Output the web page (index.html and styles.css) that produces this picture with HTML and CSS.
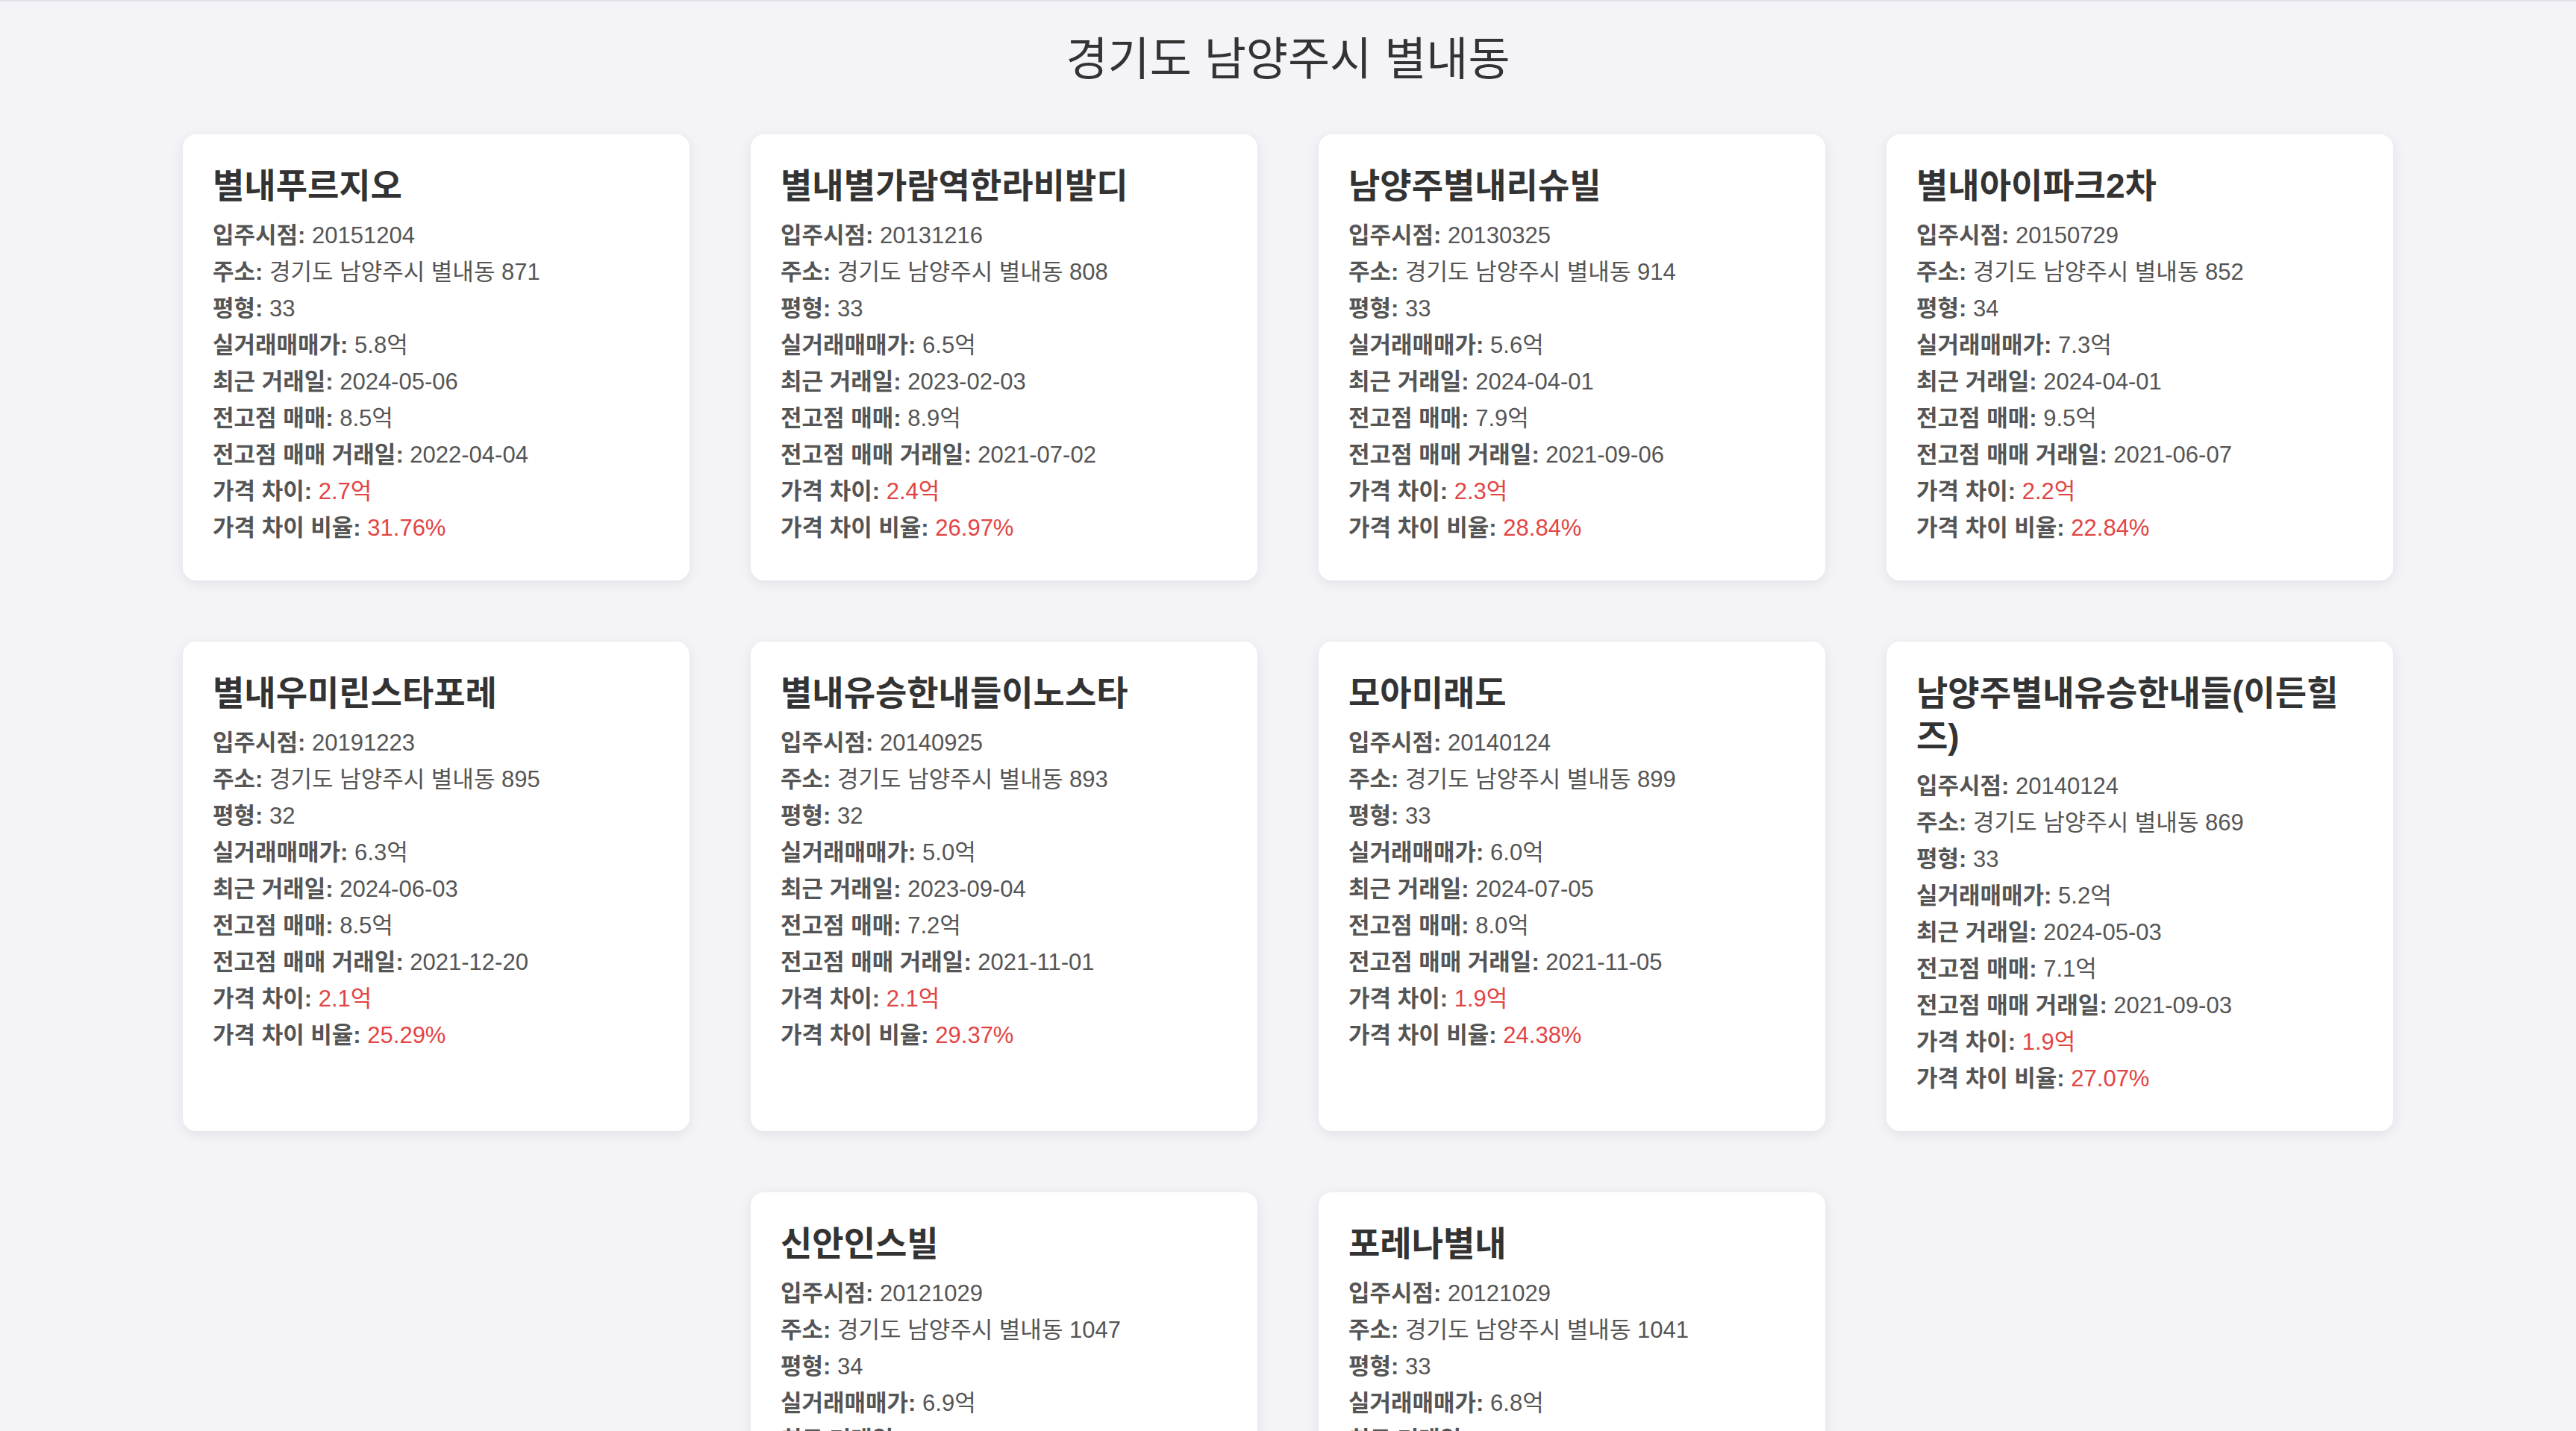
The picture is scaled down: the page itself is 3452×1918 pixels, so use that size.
FILE: index.html
```html
<!DOCTYPE html>
<html lang="ko">
<head>
<meta charset="utf-8">
<title>경기도 남양주시 별내동</title>
<link rel="stylesheet" href="styles.css">
</head>
<body>
<div class="page">
  <h1 class="page-title">경기도 남양주시 별내동</h1>
  <div class="cards">
    <div class="card">
      <h2 class="card-title">별내푸르지오</h2>
      <p><b>입주시점:</b> 20151204</p>
      <p><b>주소:</b> 경기도 남양주시 별내동 871</p>
      <p><b>평형:</b> 33</p>
      <p><b>실거래매매가:</b> 5.8억</p>
      <p><b>최근 거래일:</b> 2024-05-06</p>
      <p><b>전고점 매매:</b> 8.5억</p>
      <p><b>전고점 매매 거래일:</b> 2022-04-04</p>
      <p><b>가격 차이:</b> <span class="red">2.7억</span></p>
      <p><b>가격 차이 비율:</b> <span class="red">31.76%</span></p>
    </div>
    <div class="card">
      <h2 class="card-title">별내별가람역한라비발디</h2>
      <p><b>입주시점:</b> 20131216</p>
      <p><b>주소:</b> 경기도 남양주시 별내동 808</p>
      <p><b>평형:</b> 33</p>
      <p><b>실거래매매가:</b> 6.5억</p>
      <p><b>최근 거래일:</b> 2023-02-03</p>
      <p><b>전고점 매매:</b> 8.9억</p>
      <p><b>전고점 매매 거래일:</b> 2021-07-02</p>
      <p><b>가격 차이:</b> <span class="red">2.4억</span></p>
      <p><b>가격 차이 비율:</b> <span class="red">26.97%</span></p>
    </div>
    <div class="card">
      <h2 class="card-title">남양주별내리슈빌</h2>
      <p><b>입주시점:</b> 20130325</p>
      <p><b>주소:</b> 경기도 남양주시 별내동 914</p>
      <p><b>평형:</b> 33</p>
      <p><b>실거래매매가:</b> 5.6억</p>
      <p><b>최근 거래일:</b> 2024-04-01</p>
      <p><b>전고점 매매:</b> 7.9억</p>
      <p><b>전고점 매매 거래일:</b> 2021-09-06</p>
      <p><b>가격 차이:</b> <span class="red">2.3억</span></p>
      <p><b>가격 차이 비율:</b> <span class="red">28.84%</span></p>
    </div>
    <div class="card">
      <h2 class="card-title">별내아이파크2차</h2>
      <p><b>입주시점:</b> 20150729</p>
      <p><b>주소:</b> 경기도 남양주시 별내동 852</p>
      <p><b>평형:</b> 34</p>
      <p><b>실거래매매가:</b> 7.3억</p>
      <p><b>최근 거래일:</b> 2024-04-01</p>
      <p><b>전고점 매매:</b> 9.5억</p>
      <p><b>전고점 매매 거래일:</b> 2021-06-07</p>
      <p><b>가격 차이:</b> <span class="red">2.2억</span></p>
      <p><b>가격 차이 비율:</b> <span class="red">22.84%</span></p>
    </div>
    <div class="card">
      <h2 class="card-title">별내우미린스타포레</h2>
      <p><b>입주시점:</b> 20191223</p>
      <p><b>주소:</b> 경기도 남양주시 별내동 895</p>
      <p><b>평형:</b> 32</p>
      <p><b>실거래매매가:</b> 6.3억</p>
      <p><b>최근 거래일:</b> 2024-06-03</p>
      <p><b>전고점 매매:</b> 8.5억</p>
      <p><b>전고점 매매 거래일:</b> 2021-12-20</p>
      <p><b>가격 차이:</b> <span class="red">2.1억</span></p>
      <p><b>가격 차이 비율:</b> <span class="red">25.29%</span></p>
    </div>
    <div class="card">
      <h2 class="card-title">별내유승한내들이노스타</h2>
      <p><b>입주시점:</b> 20140925</p>
      <p><b>주소:</b> 경기도 남양주시 별내동 893</p>
      <p><b>평형:</b> 32</p>
      <p><b>실거래매매가:</b> 5.0억</p>
      <p><b>최근 거래일:</b> 2023-09-04</p>
      <p><b>전고점 매매:</b> 7.2억</p>
      <p><b>전고점 매매 거래일:</b> 2021-11-01</p>
      <p><b>가격 차이:</b> <span class="red">2.1억</span></p>
      <p><b>가격 차이 비율:</b> <span class="red">29.37%</span></p>
    </div>
    <div class="card">
      <h2 class="card-title">모아미래도</h2>
      <p><b>입주시점:</b> 20140124</p>
      <p><b>주소:</b> 경기도 남양주시 별내동 899</p>
      <p><b>평형:</b> 33</p>
      <p><b>실거래매매가:</b> 6.0억</p>
      <p><b>최근 거래일:</b> 2024-07-05</p>
      <p><b>전고점 매매:</b> 8.0억</p>
      <p><b>전고점 매매 거래일:</b> 2021-11-05</p>
      <p><b>가격 차이:</b> <span class="red">1.9억</span></p>
      <p><b>가격 차이 비율:</b> <span class="red">24.38%</span></p>
    </div>
    <div class="card">
      <h2 class="card-title">남양주별내유승한내들(이든힐즈)</h2>
      <p><b>입주시점:</b> 20140124</p>
      <p><b>주소:</b> 경기도 남양주시 별내동 869</p>
      <p><b>평형:</b> 33</p>
      <p><b>실거래매매가:</b> 5.2억</p>
      <p><b>최근 거래일:</b> 2024-05-03</p>
      <p><b>전고점 매매:</b> 7.1억</p>
      <p><b>전고점 매매 거래일:</b> 2021-09-03</p>
      <p><b>가격 차이:</b> <span class="red">1.9억</span></p>
      <p><b>가격 차이 비율:</b> <span class="red">27.07%</span></p>
    </div>
    <div class="card">
      <h2 class="card-title">신안인스빌</h2>
      <p><b>입주시점:</b> 20121029</p>
      <p><b>주소:</b> 경기도 남양주시 별내동 1047</p>
      <p><b>평형:</b> 34</p>
      <p><b>실거래매매가:</b> 6.9억</p>
      <p><b>최근 거래일:</b> 2024-07-04</p>
      <p><b>전고점 매매:</b> 8.7억</p>
      <p><b>전고점 매매 거래일:</b> 2021-10-16</p>
      <p><b>가격 차이:</b> <span class="red">1.8억</span></p>
      <p><b>가격 차이 비율:</b> <span class="red">26.09%</span></p>
    </div>
    <div class="card">
      <h2 class="card-title">포레나별내</h2>
      <p><b>입주시점:</b> 20121029</p>
      <p><b>주소:</b> 경기도 남양주시 별내동 1041</p>
      <p><b>평형:</b> 33</p>
      <p><b>실거래매매가:</b> 6.8억</p>
      <p><b>최근 거래일:</b> 2024-07-04</p>
      <p><b>전고점 매매:</b> 8.5억</p>
      <p><b>전고점 매매 거래일:</b> 2021-10-09</p>
      <p><b>가격 차이:</b> <span class="red">1.7억</span></p>
      <p><b>가격 차이 비율:</b> <span class="red">25.00%</span></p>
    </div>
  </div>
</div>
</body>
</html>
```
FILE: styles.css
```css
html, body {
  margin: 0;
  padding: 0;
  background: #f4f4f8;
}

body {
  font-family: "Liberation Sans", "Noto Sans CJK KR", sans-serif;
  color: #555;
}

.page {
  border-top: 2px solid #e2e2e8;
}

.page-title {
  margin: 0;
  padding: 42px 0 64px;
  font-size: 61px;
  line-height: 72px;
  font-weight: 400;
  color: #333;
  text-align: center;
}

.cards {
  display: flex;
  flex-wrap: wrap;
  justify-content: center;
  column-gap: 82px;
  row-gap: 82px;
}

.card {
  box-sizing: border-box;
  width: 679px;
  padding: 40px 40px 46px;
  background: #fff;
  border-radius: 18px;
  box-shadow: 0 4px 18px rgba(0, 0, 0, 0.08);
}

.card-title {
  margin: 0 0 13px;
  font-size: 46px;
  line-height: 58px;
  font-weight: 700;
  color: #333;
  word-break: normal;
  line-break: anywhere;
}

.card p {
  margin: 0;
  font-size: 31px;
  line-height: 49px;
  color: #555;
}

.card b {
  font-weight: 700;
  color: #555;
}

.red {
  color: #e24444;
}
```
